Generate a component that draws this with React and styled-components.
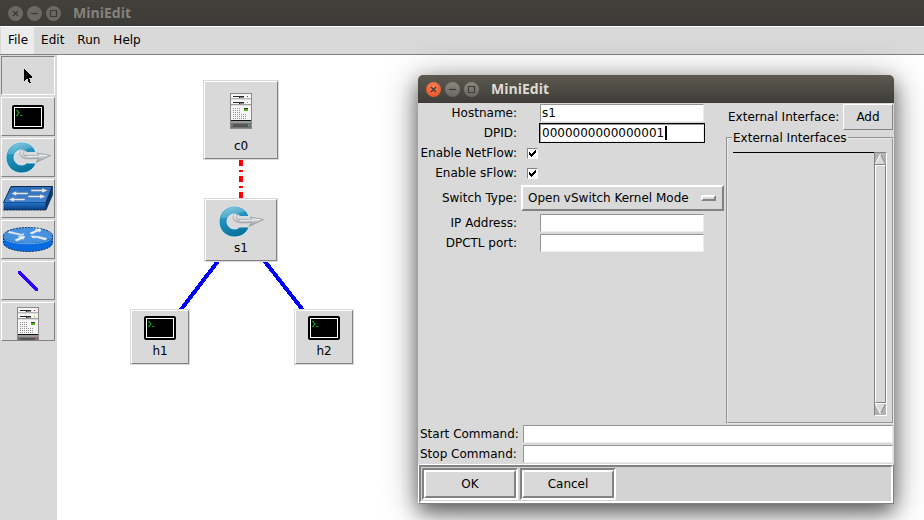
import React from "react";
import styled, { createGlobalStyle, css } from "styled-components";

const FACE = "#d9d9d9";
const DARK = "#828282";

const GlobalStyle = createGlobalStyle`
  *, *::before, *::after { box-sizing: border-box; }
  html, body, #root { height: 100%; }
  body {
    margin: 0;
    background: #fff;
    color: #000;
    font: 12px/16px "DejaVu Sans", Verdana, sans-serif;
    overflow: hidden;
  }
  button, input, select { font: inherit; color: inherit; margin: 0; }
`;

const raised = css`
  border: 1px solid;
  border-color: #fff ${DARK} ${DARK} #fff;
`;
const sunken = css`
  border: 1px solid;
  border-color: ${DARK} #fff #fff ${DARK};
`;

/* ---------- window chrome ---------- */
const AppWindow = styled.div`
  position: relative;
  display: flex;
  flex-direction: column;
  min-height: 100%;
  background: ${FACE};
`;

const TitleBar = styled.header`
  display: flex;
  align-items: center;
  gap: 4px;
  height: ${(p) => (p.$active ? 28 : 26)}px;
  padding: 0 8px;
  color: ${(p) => (p.$active ? "#dfdbd2" : "#86837b")};
  background: ${(p) =>
    p.$active ? "linear-gradient(#5c594f, #3e3d39)" : "linear-gradient(#41403b, #3c3b37)"};
  border-radius: ${(p) => (p.$active ? "5px 5px 0 0" : "0")};
`;

const Title = styled.h1`
  margin: 0 0 0 8px;
  font: bold 14px/20px "Open Sans", "Noto Sans", sans-serif;
`;

const WindowButton = styled.button`
  display: grid;
  place-items: center;
  width: 15px;
  height: 15px;
  padding: 0;
  border: 0;
  border-radius: 50%;
  color: #3b3a36;
  background: ${(p) =>
    p.$tone === "close"
      ? "radial-gradient(circle at 50% 30%, #f58259, #df4a1b)"
      : p.$tone === "lit"
      ? "linear-gradient(#8a8880, #696760)"
      : "#6a6861"};
  svg { display: block; }
`;

/* ---------- menu and tools ---------- */
const MenuBar = styled.nav`
  display: flex;
  height: 29px;
  padding: 0 1px;
  border-top: 1px solid #fff;
  border-bottom: 1px solid ${DARK};
`;

const MenuButton = styled.button`
  padding: 0 6px 2px 7px;
  border: 0;
  background: ${(p) => (p.$active ? "#ececec" : "transparent")};
`;

const Workspace = styled.div`
  display: flex;
  flex: 1;
`;

const ToolBar = styled.aside`
  display: flex;
  flex-direction: column;
  gap: 2px;
  width: 57px;
  padding: 1px 2px 0 1px;
`;

const ToolButton = styled.button`
  display: grid;
  justify-items: center;
  align-items: ${(p) => (p.$tall ? "start" : "center")};
  height: 39px;
  padding: ${(p) => (p.$tall ? "4px 0 0" : "0")};
  overflow: hidden;
  background: ${FACE};
  ${(p) => (p.$pressed ? sunken : raised)}
  svg { display: block; }
`;

/* ---------- topology canvas ---------- */
const Canvas = styled.main`
  position: relative;
  flex: 1;
  background: #fff;
`;

const Links = styled.svg`
  position: absolute;
  inset: 0;
  width: 100%;
  height: 100%;
`;

const Node = styled.button`
  position: absolute;
  left: ${(p) => p.$x}px;
  top: ${(p) => p.$y}px;
  width: ${(p) => p.$w}px;
  height: ${(p) => p.$h}px;
  display: flex;
  flex-direction: column;
  align-items: center;
  justify-content: space-between;
  padding: ${(p) => p.$pad}px 0 4px;
  background: ${FACE};
  ${raised}
  outline: 1px solid ${FACE};
  svg { display: block; }
`;

/* ---------- dialog ---------- */
const Dialog = styled.form`
  position: absolute;
  left: 418px;
  top: 75px;
  width: 476px;
  background: ${FACE};
  border-radius: 5px 5px 0 0;
  box-shadow: 0 8px 20px rgba(0, 0, 0, 0.55), 0 4px 40px rgba(0, 0, 0, 0.3);
`;

const Columns = styled.div`
  display: grid;
  grid-template-columns: 1fr 168px;
`;

const Fields = styled.div`
  display: grid;
  grid-template-columns: 99px 1fr;
  grid-template-rows: repeat(4, 20px) 30px repeat(2, 20px);
  align-items: center;
  align-content: start;
  column-gap: 3px;
  padding-right: 2px;
`;

const FieldLabel = styled.label`
  justify-self: end;
  white-space: nowrap;
`;

const TextInput = styled.input`
  width: ${(p) => (p.$wide ? "100%" : "164px")};
  height: 18px;
  padding: 0 1px;
  background: #fff;
  border: 1px solid;
  border-color: #959595 #ececec #ececec #959595;
  border-radius: 0;
  outline: ${(p) => (p.$focused ? "1px solid #000" : "none")};
  caret-color: transparent;
`;

const InputCell = styled.div`
  position: relative;
  justify-self: center;
  display: flex;
`;

const Caret = styled.span`
  position: absolute;
  left: 125px;
  top: 2px;
  width: 2px;
  height: 14px;
  background: #000;
`;

const CheckCell = styled.div`
  position: relative;
  display: flex;
  padding-left: 7px;
  svg { position: absolute; left: 8px; top: 1px; pointer-events: none; }
`;

const CheckBox = styled.input`
  appearance: none;
  width: 11px;
  height: 11px;
  background: #fff;
  ${sunken}
`;

const SelectCell = styled.div`
  position: relative;
  display: flex;
  padding-left: 1px;
`;

const Select = styled.select`
  appearance: none;
  width: 100%;
  height: 26px;
  padding: 0 28px 0 5px;
  background: ${FACE};
  border: 2px solid;
  border-color: #fff ${DARK} ${DARK} #fff;
  border-radius: 0;
`;

const SelectMark = styled.span`
  position: absolute;
  right: 8px;
  top: 10px;
  width: 15px;
  height: 6px;
  pointer-events: none;
  background: ${FACE};
  border: 2px solid;
  border-color: #fff ${DARK} ${DARK} #fff;
`;

const Side = styled.div`
  display: flex;
  flex-direction: column;
`;

const SideHead = styled.div`
  display: flex;
  align-items: center;
  justify-content: space-between;
  padding: 1px 1px 0 2px;
  white-space: nowrap;
`;

const AddButton = styled.button`
  width: 50px;
  height: 26px;
  padding: 0;
  background: ${FACE};
  ${raised}
`;

const Group = styled.fieldset`
  min-width: 0;
  margin: 0;
  padding: 6px 5px;
  border: 2px groove #e8e8e8;
  legend { padding: 0 1px; margin-left: -1px; white-space: nowrap; }
`;

const ListArea = styled.div`
  display: flex;
  height: 264px;
`;

const ListBox = styled.div`
  flex: 1;
  border-top: 1px solid #000;
`;

const ScrollBar = styled.div`
  display: flex;
  flex-direction: column;
  width: 13px;
  background: #b3b3b3;
  ${sunken}
  svg { display: block; }
`;

const ScrollArrow = styled.button`
  height: 12px;
  padding: 0;
  border: 0;
  background: none;
`;

const ScrollThumb = styled.div`
  flex: 1;
  background: ${FACE};
  ${raised}
`;

const Commands = styled.div`
  display: grid;
  grid-template-columns: 103px 1fr;
  grid-auto-rows: 20px;
  align-items: center;
  padding: 0 1px 0 2px;
`;

const ActionBar = styled.footer`
  border: 1px solid;
  border-color: #fff ${DARK} ${DARK} #fff;
`;

const Actions = styled.div`
  display: flex;
  gap: 2px;
  padding: 1px;
  background: #d3d3d3;
  border: 2px solid;
  border-color: ${DARK} #fff #fff ${DARK};
`;

const ActionFrame = styled.div`
  display: flex;
  border: 2px solid;
  border-color: ${DARK} #fff #fff ${DARK};
`;

const ActionButton = styled.button`
  width: 92px;
  height: 28px;
  padding: 0;
  background: ${FACE};
  border: 2px solid;
  border-color: #fff ${DARK} ${DARK} #fff;
`;

/* ---------- drawings ---------- */
const Glyph = ({ kind }) => (
  <svg width="15" height="15" viewBox="0 0 15 15" fill="none" stroke="currentColor" strokeWidth="1.2">
    {kind === "close" && <path d="M5 5l5 5M10 5l-5 5" />}
    {kind === "min" && <path d="M4 7.5h7" />}
    {kind === "max" && <path d="M4.5 4.5h6v6h-6z" />}
  </svg>
);

const PointerIcon = () => (
  <svg width="8" height="14" viewBox="0 0 8 14" shapeRendering="crispEdges">
    <path d="M0 0v12l3-3 2 5h2l-2-5h3V8z" />
  </svg>
);

const TerminalIcon = () => (
  <svg width="32" height="24" viewBox="0 0 32 24">
    <rect width="32" height="24" rx="2" />
    <rect x="2.5" y="2.5" width="27" height="19" fill="#000" stroke="#fff" />
    <path d="M4.500 5l2.500 3-2.500 3M8 10.500h2.500" stroke="#0aa512" strokeWidth="1.2" fill="none" />
  </svg>
);

const OvsIcon = () => (
  <svg width="46" height="34" viewBox="0 0 46 34">
    <defs>
      <linearGradient id="ring" x1="0" y1="0" x2="0.3" y2="1">
        <stop offset="0" stopColor="#79c3de" />
        <stop offset="0.45" stopColor="#2393bd" />
        <stop offset="1" stopColor="#0874a0" />
      </linearGradient>
      <linearGradient id="silver" x1="0" y1="0" x2="0" y2="1">
        <stop offset="0" stopColor="#f6f6f6" />
        <stop offset="1" stopColor="#9a9da0" />
      </linearGradient>
    </defs>
    <path
      d="M16.500 1C7.500 1 1 8 1 16.500S7.500 32 16.500 32c7 0 12.500-4 14.500-10h-9.500c-1.500 1.500-3 2-5 2-4.200 0-7.500-3.300-7.500-7.500S12.300 9 16.500 9c2.300 0 4.300 1 5.500 2.500h9C29 5 23.500 1 16.500 1z"
      fill="url(#ring)"
      stroke="#e3eff4"
      strokeWidth=".8"
    />
    <path d="M3 13C5 5 11 2 17 2c5 0 9 2 12 5-9-2-12 7-21 6z" fill="#fff" opacity=".18" />
    <path
      d="M20 9.500c-3-1-5 0-5 2.500 0 3.500 3 5.500 7 5.700 4 .2 7 0 11.500-.2L31 21.500 45.500 14.500 32 12l2 2.500c-5-.3-10 .8-13.500 0C18 14 17 11 20 9.500z"
      fill="url(#silver)"
      stroke="#8e9498"
      strokeWidth=".7"
    />
    <path d="M22 15.800L42 14.500" stroke="#fff" strokeWidth=".8" />
  </svg>
);

const SwitchIcon = () => (
  <svg width="50" height="25" viewBox="0 0 50 25">
    <defs>
      <linearGradient id="slab" x1="0" y1="0" x2="0" y2="1">
        <stop offset="0" stopColor="#2b6cb8" />
        <stop offset="1" stopColor="#3f86d6" />
      </linearGradient>
      <linearGradient id="slabFront" x1="0" y1="0" x2="0" y2="1">
        <stop offset="0" stopColor="#2274cc" />
        <stop offset="1" stopColor="#0a3f80" />
      </linearGradient>
    </defs>
    <path d="M8 .5h41.500L43 16.500H.5z" fill="url(#slab)" stroke="#0c2c55" />
    <path d="M.5 16.500H43V24H.5z" fill="url(#slabFront)" />
    <path d="M43 16.500L49.500.5V9L43 24z" fill="#0d3a70" stroke="#0a2444" strokeWidth=".6" />
    <path d="M.5 24H43" stroke="#001c40" strokeDasharray="2 1" />
    <path
      d="M28 3.500h11V2l6 2.500-6 2.500V5.500H28zM25 8.500H13.500v1.500L8 7.500 13.500 5v1.500H25zM25 9.500h12V8l6 2.500-6 2.500v-1.500H25zM22 14.500H11V16l-5.500-2.500L11 11v1.500h11z"
      fill="#e4e8ec"
      stroke="#46678e"
      strokeWidth=".4"
    />
  </svg>
);

const RouterIcon = () => (
  <svg width="50" height="25" viewBox="0 0 50 25">
    <path d="M.5 8v8c0 4.500 11 8.500 24.500 8.500s24.500-4 24.500-8.500V8z" fill="#0a6be0" stroke="#08306a" strokeDasharray="2 1" />
    <ellipse cx="25" cy="8.500" rx="24.500" ry="8" fill="#4791df" stroke="#153b6c" strokeDasharray="2 1" />
    <path d="M1 10c2 9 46 9 48 0" fill="none" stroke="#63b1f5" />
    <path
      d="M7 4.500l12 3 2-1-1 2-2-.2L5 5.500zM27 6l7-3-2-1h6l-1 3-2-1-6 3zM12 13l5-2.500-2-1 7 0-2 3-1-1-5 2.500zM28 9l7 .3 9 2.200-2 1.500-8-2.500-4 .5z"
      fill="#f2f5f8"
      stroke="#d6e2ef"
      strokeWidth=".7"
    />
  </svg>
);

const LinkIcon = () => (
  <svg width="20" height="20" viewBox="0 0 20 20" shapeRendering="crispEdges">
    <path d="M1.500 1.500L18.500 18.500" stroke="#3000ff" strokeWidth="3.500" strokeLinecap="round" />
  </svg>
);

const DOTS = Array.from({ length: 42 }, (_, i) => [3 + (i % 7) * 2, 16 + Math.floor(i / 7) * 2]).filter(
  ([x, y]) => x < 10 || y > 20
);

const ServerIcon = () => (
  <svg width="22" height="36" viewBox="0 0 22 36" shapeRendering="crispEdges">
    <rect width="22" height="36" fill="#8a8a8a" />
    <rect x="1" y="1" width="20" height="26" fill="#f6f6f6" />
    <rect x="1" y="5" width="20" height="1" fill="#b5b5b5" />
    <rect x="1" y="6" width="20" height="1" fill="#dcdcdc" />
    <rect x="1" y="11" width="20" height="1" fill="#9c9c9c" />
    <rect x="1" y="12" width="20" height="1" fill="#dcdcdc" />
    <path d="M3 3h11v1h-4v1H9V4H3zM3 9h11v1h-4v1H9v-1H3z" fill="#282828" />
    <path d="M10 4h4v1h-4zM10 10h4v1h-4z" fill="#888" />
    <rect x="17" y="3" width="1" height="1" fill="#d01010" />
    <rect x="17" y="9" width="1" height="1" fill="#68c010" />
    <rect x="14" y="15" width="4" height="1" fill="#333" />
    <rect x="14" y="16" width="4" height="2" fill="#58b41c" />
    {DOTS.map(([x, y]) => (
      <rect key={`${x}-${y}`} x={x} y={y - 1} width="1" height="1" fill="#929292" />
    ))}
    <rect x="1" y="27" width="20" height="1" fill="#111" />
    <rect x="1" y="28" width="20" height="7" fill="#737373" />
    <rect x="1" y="28" width="20" height="2" fill="#999" />
    <rect x="3" y="31" width="15" height="3" fill="#555" />
    <rect x="17" y="31" width="1" height="1" fill="#e02020" />
    <rect x="18" y="32" width="1" height="1" fill="#30c030" />
  </svg>
);

const CheckMark = () => (
  <svg width="9" height="9" viewBox="0 0 9 9" shapeRendering="crispEdges">
    <path d="M1 3h1v1h1v1h1V4h1V3h1V2h1V1h1v3H7v1H6v1H5v1H4v1H3V7H2V6H1z" />
  </svg>
);

const ArrowIcon = ({ down }) => (
  <svg width="11" height="12" viewBox="0 0 11 12">
    {down ? (
      <>
        <path d="M0 .5h11L5.500 11z" fill={FACE} />
        <path d="M10.500 1L5.500 11" stroke={DARK} />
        <path d="M0 .5h11M.5 1l5 10" stroke="#fff" />
      </>
    ) : (
      <>
        <path d="M0 11.500h11L5.500 1z" fill={FACE} />
        <path d="M0 11.500h11M10.500 11l-5-10" stroke={DARK} />
        <path d="M.5 11l5-10" stroke="#fff" />
      </>
    )}
  </svg>
);

const TOOLS = [
  { name: "Select", icon: PointerIcon, pressed: true },
  { name: "Host", icon: TerminalIcon },
  { name: "Switch", icon: OvsIcon },
  { name: "Legacy switch", icon: SwitchIcon },
  { name: "Legacy router", icon: RouterIcon },
  { name: "Link", icon: LinkIcon },
  { name: "Controller", icon: ServerIcon, tall: true },
];

const NODES = [
  { name: "c0", icon: ServerIcon, x: 147, y: 26, w: 74, h: 78, pad: 11 },
  { name: "s1", icon: OvsIcon, x: 148, y: 144, w: 72, h: 62, pad: 5 },
  { name: "h1", icon: TerminalIcon, x: 74, y: 255, w: 58, h: 54, pad: 5 },
  { name: "h2", icon: TerminalIcon, x: 238, y: 255, w: 58, h: 54, pad: 5 },
];

function Chrome({ active }) {
  return (
    <TitleBar $active={active}>
      <WindowButton type="button" aria-label="Close" $tone={active ? "close" : "dim"}>
        <Glyph kind="close" />
      </WindowButton>
      <WindowButton type="button" aria-label="Minimize" $tone={active ? "lit" : "dim"}>
        <Glyph kind="min" />
      </WindowButton>
      <WindowButton type="button" aria-label="Maximize" $tone={active ? "lit" : "dim"}>
        <Glyph kind="max" />
      </WindowButton>
      <Title>MiniEdit</Title>
    </TitleBar>
  );
}

function Check({ id, label }) {
  return (
    <>
      <FieldLabel htmlFor={id}>{label}</FieldLabel>
      <CheckCell>
        <CheckBox id={id} type="checkbox" defaultChecked />
        <CheckMark />
      </CheckCell>
    </>
  );
}

function Field({ id, label, value = "", focused }) {
  return (
    <>
      <FieldLabel htmlFor={id}>{label}</FieldLabel>
      <InputCell>
        <TextInput id={id} type="text" defaultValue={value} $focused={focused} />
        {focused && <Caret />}
      </InputCell>
    </>
  );
}

function SwitchDialog() {
  return (
    <Dialog role="dialog" aria-label="MiniEdit" onSubmit={(e) => e.preventDefault()}>
      <Chrome active />
      <Columns>
        <Fields>
          <Field id="hostname" label="Hostname:" value="s1" />
          <Field id="dpid" label="DPID:" value="0000000000000001" focused />
          <Check id="netflow" label="Enable NetFlow:" />
          <Check id="sflow" label="Enable sFlow:" />
          <FieldLabel htmlFor="type">Switch Type:</FieldLabel>
          <SelectCell>
            <Select id="type" defaultValue="kernel">
              <option value="kernel">Open vSwitch Kernel Mode</option>
            </Select>
            <SelectMark />
          </SelectCell>
          <Field id="ip" label="IP Address:" />
          <Field id="dpctl" label="DPCTL port:" />
        </Fields>
        <Side>
          <SideHead>
            <span>External Interface:</span>
            <AddButton type="button">Add</AddButton>
          </SideHead>
          <Group>
            <legend>External Interfaces</legend>
            <ListArea>
              <ListBox />
              <ScrollBar>
                <ScrollArrow type="button" aria-label="Scroll up">
                  <ArrowIcon />
                </ScrollArrow>
                <ScrollThumb />
                <ScrollArrow type="button" aria-label="Scroll down">
                  <ArrowIcon down />
                </ScrollArrow>
              </ScrollBar>
            </ListArea>
          </Group>
        </Side>
      </Columns>
      <Commands>
        <label htmlFor="start">Start Command:</label>
        <TextInput id="start" type="text" $wide />
        <label htmlFor="stop">Stop Command:</label>
        <TextInput id="stop" type="text" $wide />
      </Commands>
      <ActionBar>
        <Actions>
          <ActionFrame>
            <ActionButton type="submit">OK</ActionButton>
          </ActionFrame>
          <ActionFrame>
            <ActionButton type="button">Cancel</ActionButton>
          </ActionFrame>
        </Actions>
      </ActionBar>
    </Dialog>
  );
}

export default function App() {
  return (
    <>
      <GlobalStyle />
      <AppWindow>
        <Chrome />
        <MenuBar>
          {["File", "Edit", "Run", "Help"].map((item, i) => (
            <MenuButton key={item} type="button" $active={i === 0}>
              {item}
            </MenuButton>
          ))}
        </MenuBar>
        <Workspace>
          <ToolBar>
            {TOOLS.map(({ name, icon: Icon, pressed, tall }) => (
              <ToolButton key={name} type="button" aria-label={name} $pressed={pressed} $tall={tall}>
                <Icon />
              </ToolButton>
            ))}
          </ToolBar>
          <Canvas>
            <Links shapeRendering="crispEdges" fill="none" strokeWidth="4">
              <path d="M184 105V144" stroke="#f00" strokeDasharray="6 4 2 4" />
              <path d="M184 176L103 282M184 176L267 282" stroke="#00f" />
            </Links>
            {NODES.map(({ name, icon: Icon, x, y, w, h, pad }) => (
              <Node key={name} type="button" $x={x} $y={y} $w={w} $h={h} $pad={pad}>
                <Icon />
                <span>{name}</span>
              </Node>
            ))}
          </Canvas>
        </Workspace>
        <SwitchDialog />
      </AppWindow>
    </>
  );
}
